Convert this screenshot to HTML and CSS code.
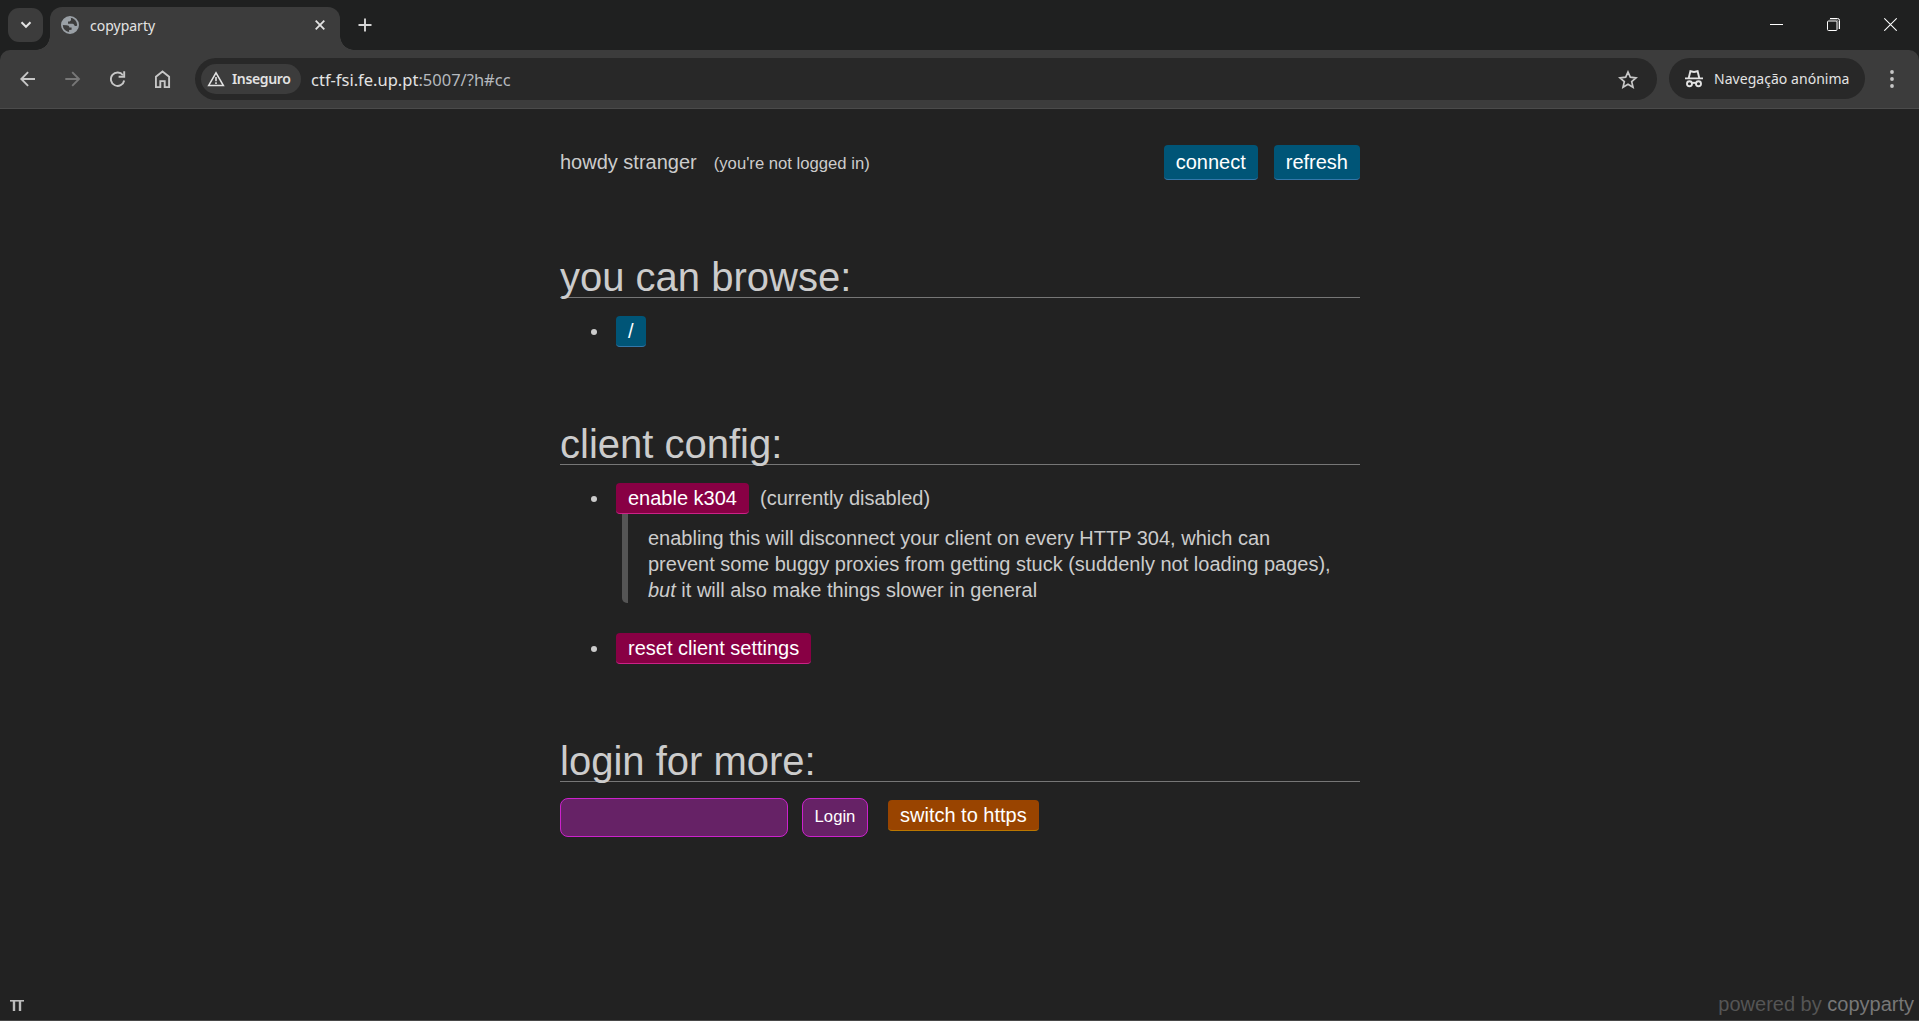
FILE: index.html
```html
<!DOCTYPE html>
<html lang="pt">
<head>
<meta charset="utf-8">
<title>copyparty</title>
<link rel="stylesheet" href="styles.css">
</head>
<body>
<div class="tabstrip">
  <div class="tab-search"><svg width="12" height="8" viewBox="0 0 12 8"><path d="M1.500 1.300 6 5.800l4.500-4.500" fill="none" stroke="#e3e3e3" stroke-width="2"/></svg></div>
  <div class="tab">
    <svg class="globe" width="18" height="18" viewBox="0 0 18 18"><circle cx="9" cy="9" r="8.1" fill="#3c3c3c" stroke="#9aa0a6" stroke-width="1.8"/><path d="M9.3.9C4.800.8 1 4.200 1 9l4.700.2c1.500 0 2.700.8 2.700 2.300h2.200v2.200l-2.500.3v3.100c4.800.4 9-3.400 9-8.100-.8 1-2.300 1.300-3.500.7-.7-1.800-2-2-3.500-1.900H7V5.600h1.600L10 4.200V2.500z" fill="#9aa0a6"/></svg>
    <span class="tab-title">copyparty</span>
    <svg class="tab-close" width="10" height="10" viewBox="0 0 10 10"><path d="M.7.7l8.600 8.600M9.300.7.7 9.300" stroke="#e3e3e3" stroke-width="1.8"/></svg>
  </div>
  <svg class="new-tab" width="14" height="14" viewBox="0 0 14 14"><path d="M7 .5v13M.5 7h13" stroke="#d5d5d5" stroke-width="1.9"/></svg>
  <div class="window-buttons">
    <svg width="13" height="14" viewBox="0 0 13 14"><path d="M0 7.500h13" stroke="#fff"/></svg>
    <svg width="13" height="14" viewBox="0 0 13 14"><path d="M3 1.500h7.500a2 2 0 0 1 2 2V12" fill="none" stroke="#fff"/><rect x=".5" y="4" width="9.500" height="9.500" rx="1" fill="none" stroke="#fff"/><path d="M2.500 3H10q1 0 1 1v8" fill="none" stroke="#999"/></svg>
    <svg width="13" height="14" viewBox="0 0 13 14"><path d="M.3 1.300l12.400 12.400M12.700 1.300.3 13.700" stroke="#fff" stroke-width="1.100"/></svg>
  </div>
</div>
<div class="toolbar">
  <div class="nav">
    <svg width="16" height="16" viewBox="0 0 16 16"><path d="M15 8H1.600M8.100 1.200 1.300 8l6.800 6.800" fill="none" stroke="#c7c7c7" stroke-width="1.900"/></svg>
    <svg width="16" height="16" viewBox="0 0 16 16"><path d="M.3 8h13.400M7.200 1.200 14 8l-6.800 6.800" fill="none" stroke="#777" stroke-width="1.900"/></svg>
    <svg width="16" height="16" viewBox="0 0 16 16"><path d="M13 4.200A6.700 6.700 0 1 0 14.200 9.500" fill="none" stroke="#c7c7c7" stroke-width="1.900"/><path d="M14.200.3v5.500H8.600" fill="none" stroke="#c7c7c7" stroke-width="1.900"/></svg>
    <svg width="16" height="18" viewBox="0 0 16 18"><path d="M.9 6.700 7.500 1.400l6.600 5.300v10.400H9.700v-6H5.300v6H.9z" fill="none" stroke="#c7c7c7" stroke-width="1.900"/></svg>
  </div>
  <div class="omnibox">
    <div class="chip"><svg width="18" height="16" viewBox="0 0 18 16"><path d="M1.600 14.600 9 1.800l7.400 12.800z" fill="none" stroke="#e3e3e3" stroke-width="1.500"/><path d="M9 6v4.300M9 11.300v1.800" stroke="#e3e3e3" stroke-width="1.600"/></svg><span>Inseguro</span></div>
    <span class="url">ctf-fsi.fe.up.pt<span class="path">:5007/?h#cc</span></span>
    <svg class="star" width="20" height="19" viewBox="0 0 20 19"><path d="M10 2l2.300 5.200 5.700.6-4.300 3.800 1.300 5.600-5-3-5 3 1.300-5.600L2 7.800l5.700-.6z" fill="none" stroke="#c7c7c7" stroke-width="1.700"/></svg>
  </div>
  <div class="incognito">
    <svg width="18" height="18" viewBox="0 0 18 18" fill="none" stroke="#e3e3e3" stroke-width="1.900"><path d="M3.800 7.800 5.400 1.200 9 2l3.600-.8 1.600 6.600M0 8.400h18"/><circle cx="4.500" cy="13.700" r="2.500"/><circle cx="13.500" cy="13.700" r="2.500"/><path d="M7 13.200q2-1 4 0"/></svg>
    <span>Navegação anónima</span>
  </div>
  <svg class="menu" width="4" height="18" viewBox="0 0 4 18" fill="#c7c7c7"><circle cx="2" cy="2" r="1.900"/><circle cx="2" cy="9" r="1.900"/><circle cx="2" cy="16" r="1.900"/></svg>
</div>
<main class="page">
  <div class="wrap">
    <div class="welcome">
      <span>howdy stranger</span><small>(you're not logged in)</small>
      <a class="btn tall connect">connect</a><a class="btn tall">refresh</a>
    </div>
    <h1>you can browse:</h1>
    <ul><li><a class="btn">/</a></li></ul>
    <h1>client config:</h1>
    <ul>
      <li><a class="btn red">enable k304</a><span class="note">(currently disabled)</span></li>
    </ul>
    <blockquote>enabling this will disconnect your client on every HTTP 304, which can<br>prevent some buggy proxies from getting stuck (suddenly not loading pages),<br><em>but</em> it will also make things slower in general</blockquote>
    <ul class="reset"><li><a class="btn red">reset client settings</a></li></ul>
    <h1>login for more:</h1>
    <form class="login">
      <input type="password" aria-label="password"><button type="button">Login</button><a class="btn orange">switch to https</a>
    </form>
  </div>
  <footer><svg width="14" height="11" viewBox="0 0 14 11"><path d="M0 .8h14" stroke="#bbb" stroke-width="1.600"/><path d="M4 1v10M10 1v10" stroke="#bbb" stroke-width="2.400"/></svg><span class="powered">powered by <b>copyparty</b></span></footer>
</main>
</body>
</html>
```
FILE: styles.css
```css
* { box-sizing: border-box; }
body { margin: 0; height: 1021px; overflow: hidden; background: #222; color: #ccc; display: flex; flex-direction: column; font-family: "Liberation Sans", Arial, sans-serif; }
svg { display: block; flex: none; }

.tabstrip { height: 50px; flex: none; background: #1f2020; display: flex; align-items: flex-start; font-family: "Noto Sans", sans-serif; }
.tab-search { width: 35px; height: 34px; margin: 8px 7px 0 8px; border-radius: 11px; background: #3c3c3c; display: flex; align-items: center; justify-content: center; }
.tab { position: relative; width: 290px; height: 43px; margin-top: 7px; border-radius: 12px 12px 0 0; background: #3c3c3c; display: flex; align-items: center; padding: 0 15px 7px 11px; }
.tab::before, .tab::after { content: ""; position: absolute; bottom: 0; width: 14px; height: 14px; }
.tab::before { left: -14px; background: radial-gradient(circle at 0 0, transparent 13.5px, #3c3c3c 14px); }
.tab::after { right: -14px; background: radial-gradient(circle at 100% 0, transparent 13.5px, #3c3c3c 14px); }
.tab-title { margin: 2px 0 0 11px; font-size: 14px; line-height: 20px; color: #e3e3e3; letter-spacing: 0; }
.tab-close { margin-left: auto; }
.new-tab { margin: 18px 0 0 18px; }
.window-buttons { margin: 17px 22px 0 auto; display: flex; gap: 44px; }

.toolbar { height: 59px; flex: none; background: linear-gradient(#1f2020, #1f2020) 0 0 / 100% 12px no-repeat; position: relative; z-index: 0; border-bottom: 1px solid #4b4b4b; display: flex; align-items: flex-start; padding-top: 8px; font-family: "Noto Sans", sans-serif; }
.toolbar::before { content: ""; position: absolute; inset: 0; z-index: -1; background: #3c3c3c; border-radius: 10px 10px 0 0; }
.nav { width: 195px; height: 42px; padding-left: 20px; display: flex; align-items: center; gap: 29px; }
.omnibox { width: 1462px; height: 42px; border-radius: 21px; background: #282828; display: flex; align-items: center; padding: 0 19px 0 6px; }
.chip { width: 100px; height: 30px; border-radius: 15px; background: #3c3c3c; display: flex; align-items: center; gap: 7px; padding-left: 6px; font-size: 14px; font-weight: 600; color: #e3e3e3; letter-spacing: -.35px; }
.chip span { margin-bottom: 2px; }
.url { margin: 1px 0 0 10px; font-size: 16.5px; color: #e3e3e3; white-space: nowrap; letter-spacing: 0; }
.path { color: #b5b9be; }
.star { margin-left: auto; }
.incognito { width: 196px; height: 41px; margin-left: 12px; border-radius: 21px; background: #282828; display: flex; align-items: center; gap: 11px; padding-left: 16px; font-size: 14px; color: #e3e3e3; white-space: nowrap; letter-spacing: .04px; }
.menu { margin: 12px 0 0 25px; }

.page { flex: 1; display: flex; flex-direction: column; font-size: 20px; line-height: 26px; border-bottom: 1px solid #484848; }
.wrap { width: 800px; margin: 36px 0 0 560px; }
.welcome { display: flex; height: 35px; line-height: 35px; }
.welcome small { font-size: 16.67px; margin-left: 17px; line-height: 37px; }
.connect { margin: 0 16px 0 auto; }
h1 { margin: 77px 0 0; height: 41px; font-size: 40px; font-weight: 400; line-height: 40px; border-bottom: 1px solid #777; }
ul { list-style: none; margin: 18px 0 0; padding: 0; }
li { display: flex; align-items: center; height: 31px; line-height: 31px; padding-left: 31px; }
li::before { content: ""; width: 6px; height: 6px; margin: 1px 19px 0 0; border-radius: 50%; background: #ccc; }
.btn { height: 31px; padding: 0 12px; line-height: 30px; color: #fff; background: #057; border-bottom: 1px solid #37a; border-radius: 4px; position: relative; white-space: nowrap; }
.tall { height: 35px; line-height: 34px; }
.red { background: #804; border-bottom-color: #c28; }
.orange { background: #940; border-bottom-color: #b70; margin: 2px 0 0 20px; }
.note { margin-left: 11px; line-height: 29px; }
blockquote { margin: 0 0 0 62px; padding: 11px 0 0 20px; border-left: 6px solid #555; border-radius: 0 0 0 5px; white-space: nowrap; }
.reset { margin-top: 30px; }
.login { display: flex; margin: 16px 0 0; }
input, button { height: 39px; margin: 0; border: 1px solid #c2c; border-radius: 8px; background: #626; color: #fff; font: 16.67px "Liberation Sans", Arial, sans-serif; }
input { width: 228px; }
button { width: 66px; margin-left: 14px; padding: 0 0 2px; }
footer { height: 30px; margin-top: auto; padding: 0 5px 0 10px; display: flex; align-items: center; }
.powered { margin: 0 0 3px auto; color: #555; }
.powered b { color: #777; font-weight: 400; }
```
